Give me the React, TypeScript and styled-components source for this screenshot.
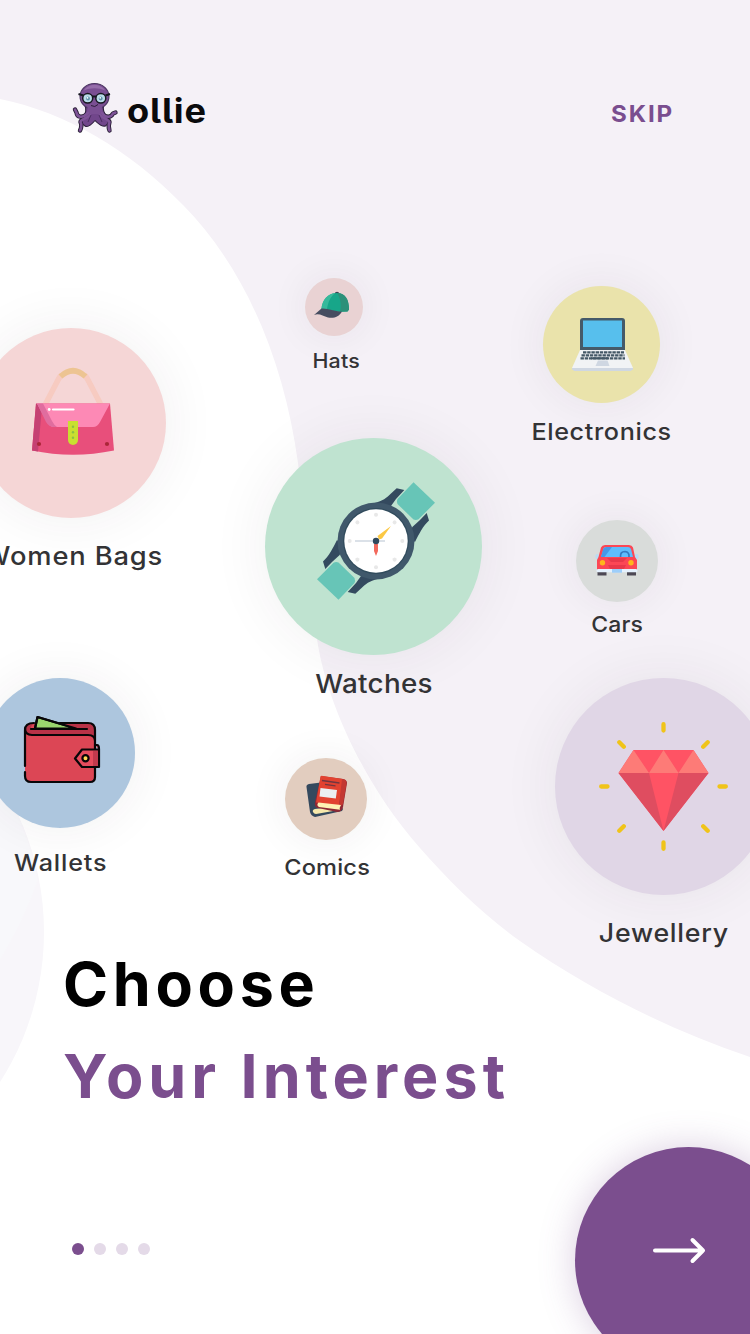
import React from 'react';
import styled, { createGlobalStyle } from 'styled-components';

const GlobalStyle = createGlobalStyle`
  *, *::before, *::after { box-sizing: border-box; }
  html, body { margin: 0; padding: 0; }
  body { font-family: Inter, "Open Sans", sans-serif; background: #fff; }
  button { font: inherit; border: 0; padding: 0; margin: 0; cursor: pointer; }
`;

const Screen = styled.main`
  position: relative;
  display: flex;
  flex-direction: column;
  width: 750px;
  height: 1334px;
  overflow: hidden;
  background: #fff;
`;

const Backdrop = styled.svg`
  position: absolute;
  inset: 0;
`;

const Header = styled.header`
  position: relative;
  display: flex;
  align-items: center;
  justify-content: space-between;
  height: 58px;
  margin-top: 79px;
  padding: 0 76px 0 72px;
`;

const Brand = styled.div`
  display: flex;
  align-items: center;
  gap: 8px;
`;

const BrandName = styled.span`
  font-size: 33.5px;
  line-height: 40px;
  font-weight: 750;
  letter-spacing: 0.7px;
  font-feature-settings: "cv05" 1;
  color: #0a0a0c;
  padding-top: 6px;
  transform: scaleX(1.08);
  transform-origin: left;
`;

const SkipButton = styled.button`
  background: none;
  color: #7a4e8f;
  font-size: 23px;
  line-height: 28px;
  font-weight: 700;
  letter-spacing: 1.8px;
  padding-top: 11px;
  transform: scaleX(1.05);
  transform-origin: right;
`;

const InterestCanvas = styled.section`
  position: relative;
  height: 813px;
`;

const Interest = styled.div<{ $x: number; $y: number; $size: number }>`
  position: absolute;
  left: ${(p) => p.$x}px;
  top: ${(p) => p.$y - 137}px;
  width: ${(p) => p.$size}px;
  display: flex;
  flex-direction: column;
  align-items: center;
`;

const Bubble = styled.div<{ $size: number; $color: string }>`
  flex: none;
  width: ${(p) => p.$size}px;
  height: ${(p) => p.$size}px;
  border-radius: 50%;
  background: ${(p) => p.$color};
  box-shadow: 0 0 ${(p) => 32 + p.$size * 0.12}px rgba(50, 45, 55, 0.075);
  svg { display: block; overflow: visible; }
`;

const Label = styled.span<{ $gap: number; $font: number; $track: number; $shift: number }>`
  margin-top: ${(p) => p.$gap}px;
  margin-left: ${(p) => p.$shift * 2}px;
  font-size: ${(p) => p.$font}px;
  line-height: 30px;
  font-weight: 550;
  letter-spacing: ${(p) => p.$track}px;
  color: #333335;
  white-space: nowrap;
  transform: scaleX(1.07);
`;

const Heading = styled.h1`
  position: relative;
  display: flex;
  flex-direction: column;
  margin: -12px 0 0 63px;
  font-size: 61px;
  line-height: 92px;
  font-weight: 700;
  white-space: nowrap;
`;

const HeadingLine = styled.span<{ $color: string; $track: number }>`
  color: ${(p) => p.$color};
  letter-spacing: ${(p) => p.$track}px;
`;

const Pager = styled.nav`
  position: relative;
  display: flex;
  gap: 10px;
  margin: 121px 0 0 72px;
`;

const Dot = styled.span<{ $active?: boolean }>`
  width: 12px;
  height: 12px;
  border-radius: 50%;
  background: ${(p) => (p.$active ? '#7b4e8e' : '#e4dae8')};
`;

const NextButton = styled.button`
  position: absolute;
  left: 575px;
  top: 1147px;
  width: 227px;
  height: 227px;
  border-radius: 50%;
  background: #7b4e8e;
  box-shadow: 0 0 36px rgba(123, 78, 142, 0.28);
  svg { position: absolute; left: 77px; top: 89px; }
`;

const Octopus = () => (
  <svg width="47" height="52" viewBox="72 82 47 52" fill="none">
    <g strokeLinecap="round" strokeLinejoin="round">
      <g stroke="#2b2038" strokeWidth="4.4">
        <path d="M88 113 C82 119 77 117 76.500 112.500 L75 109.500" />
        <path d="M102 113 C106 118.500 111 117.500 113 113.500 L115.500 112.500" />
        <path d="M90 115 C86 119.500 80.500 119 80.500 122 C82 125 81.500 127.500 80 130.500" />
        <path d="M100 115 C104 119.500 109 119 109.500 122 C108 126 108.500 128 109.500 130.500" />
      </g>
      <path d="M84.500 104 H104 C102 110 104 114 108 118 C110 122 108 124 105.500 126 C101 127 98 123 95 120.500 C92 124 88 128 85 126 C82 124 81 121 83 118 C86 114 87 110 84.500 104Z" fill="#71468b" stroke="#2f203e" strokeWidth="1.100" />
      <ellipse cx="94.500" cy="96.500" rx="14.500" ry="13" fill="#7a4f93" stroke="#4a3560" strokeWidth="1.100" />
      <path d="M86.500 103 H103 C101 108 102 111 104 114 H86 C88 111 88 107 86.500 103Z" fill="#7a4f93" />
      <g stroke="#7f5498" strokeWidth="2.500">
        <path d="M88 113 C82 119 77 117 76.500 112.500 L75 109.500" />
        <path d="M102 113 C106 118.500 111 117.500 113 113.500 L115.500 112.500" />
        <path d="M90 115 C86 119.500 80.500 119 80.500 122 C82 125 81.500 127.500 80 130.500" />
        <path d="M100 115 C104 119.500 109 119 109.500 122 C108 126 108.500 128 109.500 130.500" />
      </g>
    </g>
    <path d="M84 90.500 C87 83 102 83 105 90.500 C99 87.500 90 87.500 84 90.500Z" fill="#a17bb3" opacity=".7" />
    <ellipse cx="87.700" cy="98.300" rx="5" ry="4.700" fill="#b9dce9" stroke="#171821" strokeWidth="1.500" />
    <ellipse cx="100.800" cy="98.300" rx="5" ry="4.700" fill="#b9dce9" stroke="#171821" strokeWidth="1.500" />
    <path d="M78.500 94 L83.500 95.500 M105.500 95.500 L110 94 M92 96.500 H96.500" stroke="#171821" strokeWidth="2" />
    <circle cx="88" cy="98.500" r="1.900" fill="#5f93ab" /><circle cx="100.700" cy="98.500" r="1.900" fill="#5f93ab" />
    <circle cx="87.500" cy="97.800" r=".9" fill="#fff" /><circle cx="100.200" cy="97.800" r=".9" fill="#fff" />
    <path d="M91 105.500 Q95 108 98 104.500" stroke="#2c1d3a" strokeWidth="1" />
    <path d="M91 115 L88 122 M99 115 L102 122" stroke="#4b2d62" strokeWidth="1" />
  </svg>
);

/* Icon view boxes share the coordinate system of the screen. */
const BagIcon = () => (
  <svg width="190" height="190" viewBox="-24 328 190 190" fill="none">
    <path d="M45.500 404 L58 380 Q59.500 377 61.500 375 M100.500 404 L88 380 Q86.500 377 84.500 375" stroke="#f7cbc1" strokeWidth="5.600" />
    <path d="M60.500 376.500 Q73 365 85.500 376.500" stroke="#edc492" strokeWidth="5.600" />
    <path d="M36 403.500 H110 L114 450.500 Q73 459 32 450.500Z" fill="#e84f7b" />
    <path d="M36 403.500 L42 407 L38 451.500 L32 450.500Z" fill="#c54173" />
    <path d="M37 403.500 H110 L100 422 Q97.500 427 93 427 H54 Q50 427 47 422Z" fill="#fd89b5" />
    <path d="M37 403.500 H43 L52 421 Q54 425 57 427 H54 Q49 427 46 422Z" fill="#e06d9f" />
    <path d="M53 409.500 H73.500" stroke="#fff" strokeWidth="2.200" strokeLinecap="round" />
    <circle cx="49.200" cy="409.500" r="1.400" fill="#fff" />
    <path d="M68 421 H78 V440 A5 5 0 0 1 68 440Z" fill="#c9df30" />
    <g fill="#8bc043"><circle cx="73" cy="426.700" r="1.200" /><circle cx="73" cy="432.200" r="1.200" /><circle cx="73" cy="437.800" r="1.200" /></g>
    <circle cx="39" cy="444" r="2.100" fill="#aa2638" /><circle cx="107" cy="444" r="2.100" fill="#aa2638" />
  </svg>
);

const CapIcon = () => (
  <svg width="58" height="58" viewBox="305 278 58 58">
    <ellipse cx="337" cy="293.500" rx="2.200" ry="1.800" fill="#3b4453" />
    <path d="M321.500 309 C322 300 328 293 337 293 C345 293 349 300 349 309.500 L347.500 311.500 L339 312Z" fill="#17a689" />
    <path d="M337 293 C346 293 349 300 349 309.500 L347.500 311.500 L340 311.500 C342 305 340 297 337 293Z" fill="#2c9079" />
    <path d="M321.500 309 C322 300 328 293.500 335 293.300 C329 298 328 304 327 309Z" fill="#37b99b" />
    <path d="M314 315 L321.500 308.500 C328 308 334 311.500 342 311.500 C339 317 334 318.500 328 317.500 C323 316 319 313 314 315Z" fill="#464d60" />
  </svg>
);

const LaptopIcon = () => (
  <svg width="117" height="117" viewBox="543 286 117 117">
    <path d="M580 350 V321 Q580 318 583 318 H622 Q625 318 625 321 V350Z" fill="#455a69" />
    <path d="M583 320.500 H622 V347 H583Z" fill="#57bfed" />
    <path d="M580 350 H625 L633 368 H572Z" fill="#f1f3f5" />
    <path d="M572 368 H633 V369.500 L630.500 371 H574.500 L572 369.500Z" fill="#cfd7e2" />
    <path d="M583 352.300 H624 M581.500 355.400 H624.500 M580.500 358.300 H625" stroke="#435765" strokeWidth="2.200" strokeDasharray="3.400 .8" />
    <path d="M591 358.300 H608" stroke="#435765" strokeWidth="2" />
    <path d="M598 360.500 H607.500 L609.500 366 H595.500Z" fill="#cfd7e2" />
  </svg>
);

const Strap = () => (
  <>
    <path d="M375 503 C382 501 387 498 391 493.500 L396.700 488.300 L404.300 490 L396 499 L391 506 L380 509Z" fill="#344a5f" />
    <path d="M426.700 513 L429 520.500 C423 526 419 534 415 542 L409 536 L412.300 527 L420 520Z" fill="#344a5f" />
    <path d="M413.500 482.300 L435 502.700 L418.500 519.300 Q416 520.500 413.500 519.500 L397.500 504 Q396.500 501.500 397.500 499Z" fill="#67c5b7" />
  </>
);

const WatchIcon = () => (
  <svg width="217" height="217" viewBox="265 438 217 217">
    <Strap />
    <g transform="rotate(180 376 541)"><Strap /></g>
    <circle cx="376" cy="541" r="38.500" fill="#40586b" />
    <circle cx="376" cy="541" r="33" fill="#304b5c" />
    <circle cx="376" cy="541" r="31.700" fill="#fff" />
    <g fill="#e8e8e8">{[0, 45, 90, 135, 180, 225, 270, 315].map((a) => <circle key={a} cx="376" cy="514.700" r="2" transform={`rotate(${a} 376 541)`} />)}</g>
    <path d="M355 541 H385" stroke="#ccd5de" strokeWidth="1.400" />
    <path d="M374 544 H378 L378 551 L376 556 L374 551Z" fill="#f3695c" />
    <path d="M377.500 536 L391 526 L382 538.500 L379 539.500Z" fill="#fbc844" />
    <circle cx="376" cy="541" r="3.200" fill="#30485c" />
  </svg>
);

const CarIcon = () => (
  <svg width="82" height="82" viewBox="576 520 82 82">
    <path d="M597.500 571 H606.500 V575.500 H597.500Z M627 571 H636 V575.500 H627Z" fill="#4d4854" />
    <rect x="595.500" y="554" width="3.500" height="5" rx="1.700" fill="#b9dcf4" /><rect x="634.500" y="554" width="4" height="5" rx="1.700" fill="#b9dcf4" />
    <path d="M598.500 557 L601 547.500 Q602 545 605 545 H629 Q632 545 633 547.500 L635 557 L637 560 V571 H597 V560Z" fill="#fc4755" />
    <path d="M601 557 L603.500 548.500 Q604 547 606 547 H628 Q630 547 631 549 L633 557Z" fill="#5ebdfc" />
    <path d="M606 547 H612 L604.500 557 H601 L603.500 548.500Z" fill="#4798e7" />
    <path d="M620.500 557 Q620 551.500 625 551.500 Q629.500 552 629 557" stroke="#347ac1" strokeWidth="1.700" fill="none" />
    <path d="M607 558 H627 L623 562 H611Z M608 565 H626 L624 569 H610Z" fill="#e9394b" />
    <circle cx="602.500" cy="562.700" r="2.700" fill="#ffb61c" /><circle cx="631" cy="562.700" r="2.700" fill="#ffb61c" />
    <rect x="596.500" y="569" width="41" height="3.200" rx="1.500" fill="#e5f1fd" /><rect x="612" y="569" width="10" height="3.700" fill="#9dcefa" />
  </svg>
);

const WalletIcon = () => (
  <svg width="150" height="150" viewBox="-15 678 150 150" stroke="#080608" strokeWidth="2.200" strokeLinejoin="round" strokeLinecap="round">
    <path d="M25 730 Q25 723 31 723 H89 Q95 723 95 729 V777 Q95 782 90 782 H31 Q25 782 25 776Z" fill="#dc4655" stroke="none" />
    <path d="M35 728.500 L37.500 717 L76 728.500Z" fill="#9bd56e" />
    <path d="M25 730 Q26 735 32 735 H89 Q95 736 95 740 V729 Q95 723 90 723 H60 L76 728.500 H31 Q31 724 35 723 Q25 722 25 730Z" fill="#b83247" stroke="none" />
    <path d="M25 728 Q25 735 32 735 H88 Q95 735 95 741 M31 729 H87 M34 723 Q25 723 25 730 V766 M60 723 H88 Q95 723 95 730 V777 Q95 782 90 782 H31 Q25 782 25 776 V772" fill="none" />
    <path d="M35 728.500 L37.500 717 L76 728.500" fill="none" />
    <path d="M95 745 H97 Q99 745 99 749 V767 H82 L75 758.500 L82 749.500 H99" fill="#e54c5d" />
    <path d="M93 751 H98 V766 H93Z" fill="#c23a4d" stroke="none" />
    <circle cx="85.500" cy="758.300" r="3.100" fill="#ffda53" />
  </svg>
);

const BooksIcon = () => (
  <svg width="82" height="82" viewBox="285 758 82 82">
    <path d="M309 784 L325 782 L343 809 L342 811 L315 817 Q311 816 310 812 L306.500 787 Q306 785 309 784Z" fill="#34495e" />
    <path d="M313 812 Q312 810 315 809 L339 806 V810 L316 814 Q314 814 313 812Z" fill="#f7e9ac" />
    <path d="M321 776 L343 779 Q347 780 347 783 L343 807 Q342 812 337 812 L318 808 Q314 807 315 802Z" fill="#8e2835" />
    <path d="M320.500 776.500 Q321 775.500 323 776 L343 779 L339 806 L316 802.500Z" fill="#e24230" />
    <path d="M342 779 L345 779.500 Q347 781 346.500 784 L343 804 Q342 806 339 806Z" fill="#c33832" />
    <path d="M318.500 802.500 L341 805 Q339 808 340 809.800 L319 807 Q316 805 318.500 802.500Z" fill="#fff2b4" />
    <path d="M320.500 788 L337 790 L335.800 798.500 L319.500 796.500Z" fill="#eceff1" />
    <path d="M322 780.500 L339.500 783 M325 784.300 L335.500 785.800" stroke="#713640" strokeWidth="1.300" />
  </svg>
);

const DiamondIcon = () => (
  <svg width="217" height="217" viewBox="555 678 217 217">
    <path d="M633.500 750 H693.500 L708.500 773 L663.500 831 L618.500 773Z" fill="#ff5364" />
    <path d="M618.500 773 H649 L663.500 831Z M678.500 773 H708.500 L663.500 831Z" fill="#df4d60" />
    <path d="M633.500 750 L649 773 H618.500Z M663.500 750 L678.500 773 H649Z M693.500 750 L708.500 773 H678.500Z" fill="#fd7b77" />
    <g stroke="#f0c419" strokeWidth="4.300" strokeLinecap="round">
      <path d="M663.500 724.200 V730.500 M663.500 842.500 V848.800 M601.200 786.500 H607.500 M719.500 786.500 H725.800 M619.300 742.300 L623.800 746.800 M707.700 742.300 L703.200 746.800 M619.300 830.700 L623.800 826.200 M707.700 830.700 L703.200 826.200" />
    </g>
  </svg>
);

type InterestItem = {
  name: string;
  x: number;
  y: number;
  size: number;
  color: string;
  gap: number;
  font: number;
  track: number;
  shift: number;
  icon: React.ReactNode;
};

const interests: InterestItem[] = [
  { name: 'Women Bags', x: -24, y: 328, size: 190, color: '#f5d6d6', gap: 23, font: 25.5, track: 0.8, shift: 2.2, icon: <BagIcon /> },
  { name: 'Hats', x: 305, y: 278, size: 58, color: '#e9d2d3', gap: 10, font: 20, track: 0.2, shift: 2.3, icon: <CapIcon /> },
  { name: 'Electronics', x: 543, y: 286, size: 117, color: '#eae3ab', gap: 13.5, font: 23.5, track: 0.6, shift: 0, icon: <LaptopIcon /> },
  { name: 'Watches', x: 265, y: 438, size: 217, color: '#bfe3d0', gap: 14, font: 26, track: 0.3, shift: 0.5, icon: <WatchIcon /> },
  { name: 'Cars', x: 576, y: 520, size: 82, color: '#d9dcda', gap: 7, font: 21.5, track: 0.1, shift: 0, icon: <CarIcon /> },
  { name: 'Wallets', x: -15, y: 678, size: 150, color: '#adc6de', gap: 20, font: 23.5, track: 0.8, shift: 0.8, icon: <WalletIcon /> },
  { name: 'Comics', x: 285, y: 758, size: 82, color: '#e2cdbf', gap: 12, font: 22, track: 0.2, shift: 1.2, icon: <BooksIcon /> },
  { name: 'Jewellery', x: 555, y: 678, size: 217, color: '#e0d6e6', gap: 23, font: 25, track: 0.7, shift: 0.3, icon: <DiamondIcon /> },
];

export default function App() {
  return (
    <Screen>
      <GlobalStyle />
      <Backdrop width="750" height="1334" viewBox="0 0 750 1334">
        <path
          d="M0 0 H750 V1057 C665 1028 590 990 520 941 C482 914 448 880 420 848 C360 780 325 695 317 639 C305 585 305 520 298 463 C284 360 245 268 183 205 C130 150 65 112 0 99Z"
          fill="#f5f1f7"
        />
        <circle cx="-234" cy="932" r="278" fill="#f8f6fa" />
        <path d="M0 782 Q28 828 38 880 Q24 920 0 960Z" fill="#f8f8fb" />
      </Backdrop>
      <Header>
        <Brand>
          <Octopus />
          <BrandName>ollie</BrandName>
        </Brand>
        <SkipButton>SKIP</SkipButton>
      </Header>
      <InterestCanvas>
        {interests.map((item) => (
          <Interest key={item.name} $x={item.x} $y={item.y} $size={item.size}>
            <Bubble $size={item.size} $color={item.color}>{item.icon}</Bubble>
            <Label $gap={item.gap} $font={item.font} $track={item.track} $shift={item.shift}>{item.name}</Label>
          </Interest>
        ))}
      </InterestCanvas>
      <Heading>
        <HeadingLine $color="#000" $track={4.7}>Choose</HeadingLine>
        <HeadingLine $color="#7b4e8e" $track={5}>Your Interest</HeadingLine>
      </Heading>
      <Pager aria-label="Onboarding steps">
        <Dot $active />
        <Dot />
        <Dot />
        <Dot />
      </Pager>
      <NextButton aria-label="Next">
        <svg width="56" height="30" viewBox="652 1236 56 30" fill="none" stroke="#fff" strokeWidth="4" strokeLinecap="round" strokeLinejoin="round">
          <path d="M655 1250.500 H703 M692.500 1240 L703 1250.500 L692.500 1261" />
        </svg>
      </NextButton>
    </Screen>
  );
}
